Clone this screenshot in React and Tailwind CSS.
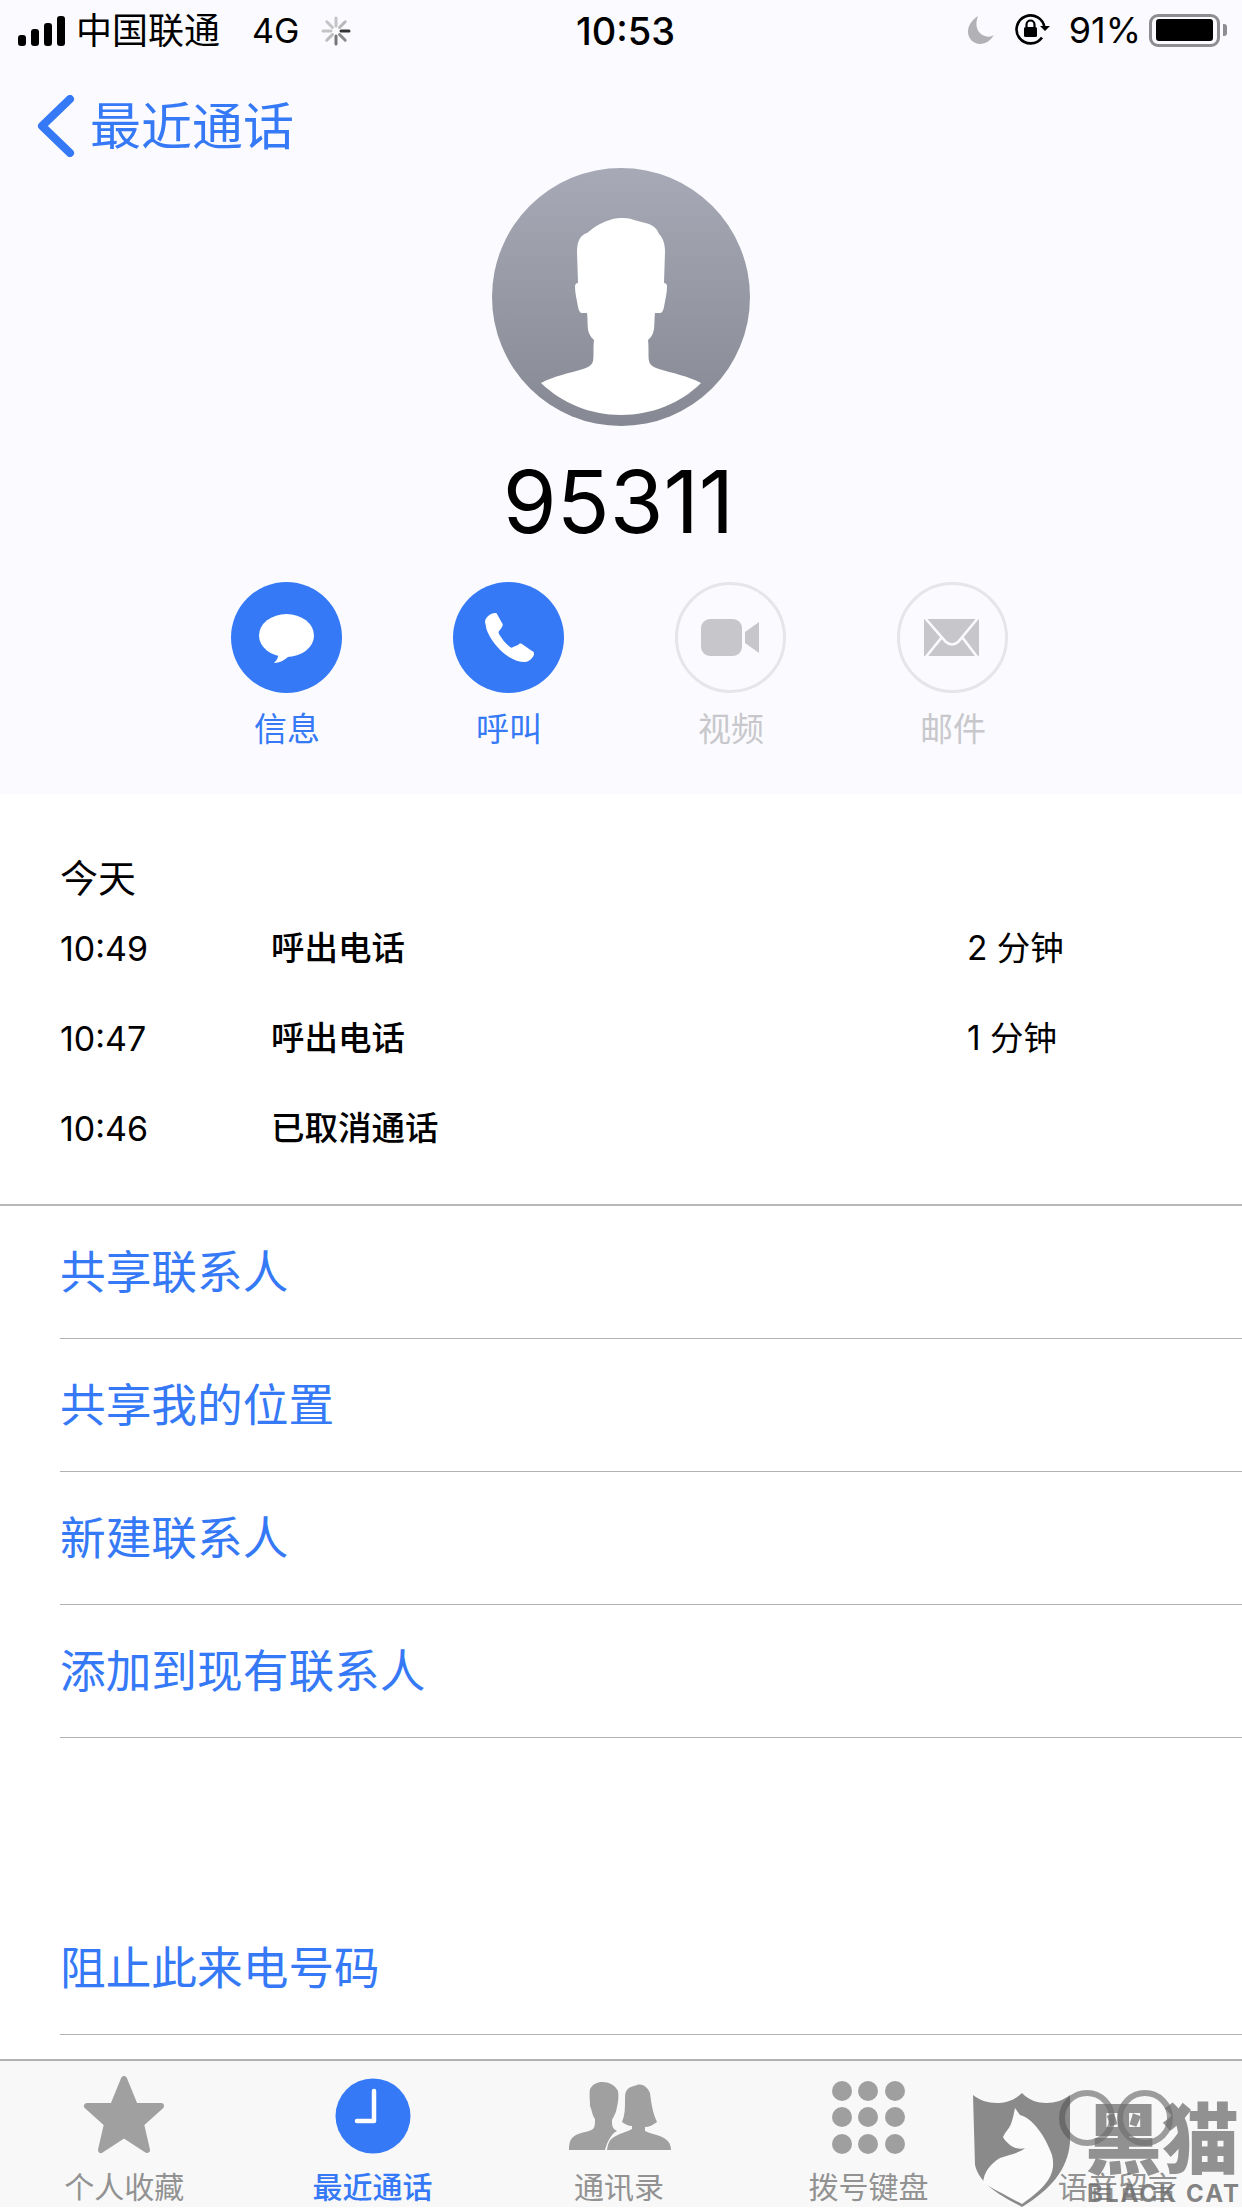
const FONT = "font-['Inter','Noto_Sans_CJK_SC',sans-serif]";

function Signal() {
  return (
    <svg width="50" height="30" viewBox="0 0 50 30" className="ml-[17px]">
      <rect x="1" y="19" width="8" height="11" rx="3" fill="#000" />
      <rect x="14" y="13" width="8" height="17" rx="3" fill="#000" />
      <rect x="27" y="7" width="8" height="23" rx="3" fill="#000" />
      <rect x="40" y="0" width="8" height="30" rx="3" fill="#000" />
    </svg>
  );
}

function Spinner() {
  const spokes = [0, 45, 90, 135, 180, 225, 270, 315];
  const colors = ['#c4c4c4', '#b8b8b8', '#333', '#8a8a8a', '#777', '#bbb', '#c4c4c4', '#c4c4c4'];
  return (
    <svg width="30" height="30" viewBox="0 0 30 30">
      {spokes.map((a, i) => (
        <line key={a} x1="15" y1="2" x2="15" y2="10" stroke={colors[i]} strokeWidth="3" strokeLinecap="round" transform={`rotate(${a} 15 15)`} />
      ))}
    </svg>
  );
}

function StatusBar() {
  return (
    <div className="relative flex h-[60px] items-center text-black">
      <div className="mt-[1px] flex items-center">
        <Signal />
        <span className="ml-[9px] text-[36px] leading-[44px]">中国联通</span>
        <span className="ml-[32px] text-[34px] leading-[44px]">4G</span>
        <div className="ml-[22px]"><Spinner /></div>
      </div>
      <span className="absolute left-[576px] top-[9px] text-[38px] font-medium leading-[44px]">10:53</span>
      <div className="ml-auto flex items-center">
        <svg width="30" height="30" viewBox="0 0 30 30">
          <path d="M13 1C7 5 3 10 3 17c0 7 6 12 12 12 6 0 11-4 14-9-3 2-6 2-9 1C13 19 9 11 13 1z" fill="#b1b1b6" />
        </svg>
        <svg width="36" height="32" viewBox="0 0 36 32" className="ml-[19px]">
          <path d="M28 23.5A14 14 0 1 1 30.5 14" fill="none" stroke="#000" strokeWidth="2.6" />
          <path d="M26 12l5 5 5-5z" fill="#000" />
          <rect x="10" y="13" width="13" height="10" rx="1.5" fill="#000" />
          <path d="M12.5 13v-2.500a4 4 0 0 1 8 0V13" fill="none" stroke="#000" strokeWidth="2.2" />
        </svg>
        <span className="ml-[19px] text-[36px] leading-[44px]">91%</span>
        <div className="ml-[8px] flex h-[33px] w-[71px] items-center justify-center rounded-[9px] border-[3px] border-[#8e8e90]">
          <div className="h-[22px] w-[57px] rounded-[3px] bg-black" />
        </div>
        <div className="ml-[3px] mr-[15px] h-[12px] w-[4px] rounded-r-[3px] bg-[#8e8e90]" />
      </div>
    </div>
  );
}

function Avatar() {
  return (
    <svg width="258" height="258" viewBox="0 0 258 258" className="mx-auto block">
      <defs>
        <linearGradient id="av" x1="0" y1="0" x2="0" y2="1">
          <stop offset="0" stopColor="#a7aab6" />
          <stop offset="1" stopColor="#868993" />
        </linearGradient>
      </defs>
      <circle cx="129" cy="129" r="129" fill="url(#av)" />
      <path
        fill="#fff"
        d="M128 50C122 50 114 53 108 56C102 59 99 62 95 65C88 67 85 74 85 84L86 115C84 115 83 116 83 119C83 126 85 132 86 139C87 143 88 145 90 145L95 145C96 152 95 160 97 165C98 168 100 170 102 172C101 180 102 188 101 193C100 197 97 199 91 201C78 205 62 208 49 215C70 235 98 247 129 247C160 247 189 235 209 215C196 208 180 205 167 201C161 199 158 197 157 193C156 188 157 180 156 172C158 170 160 168 161 165C163 160 162 152 163 145L168 145C170 145 171 143 172 139C173 132 175 126 175 119C175 116 174 115 172 115L173 84C173 76 171 70 167 66C165 60 161 58 157 56L142 52C137 50 133 50 128 50Z"
      />
    </svg>
  );
}

function ActionButton({ label, active, children }) {
  return (
    <div className="flex w-[222px] flex-col items-center">
      <div className={`h-[111px] w-[111px] rounded-full ${active ? 'bg-[#3579f6]' : 'border-[3px] border-[#e5e5ea]'}`}>
        {children}
      </div>
      <span className={`ml-[2px] mt-[16px] text-[33px] leading-[40px] ${active ? 'text-[#3579f6]' : 'text-[#c8c8cc]'}`}>{label}</span>
    </div>
  );
}

function Actions() {
  return (
    <div className="mt-[30px] flex pl-[175px]">
      <ActionButton label="信息" active>
        <svg width="111" height="111" viewBox="0 0 111 111">
          <ellipse cx="55.500" cy="53.500" rx="27.500" ry="21.500" fill="#fff" />
          <path d="M47 70C48 75 46 78 43 81C50 81 55 77 59 73z" fill="#fff" />
        </svg>
      </ActionButton>
      <ActionButton label="呼叫" active>
        <svg width="111" height="111" viewBox="0 0 111 111">
          <path
            fill="#fff"
            d="M42 31C38 31 32 35 32 40C33 44 33 47 35 51C40 61 47 69 56 75C61 78 66 80 72 80C76 80 81 75 81 72C81 70 80 69 79 69L69 62C67 61 66 62 65 63L60 65C59 66 58 66 57 65C52 61 49 57 46 52C45 50 46 49 47 48L49 45C50 43 50 42 49 41L44 32C44 31 43 31 42 31Z"
          />
        </svg>
      </ActionButton>
      <ActionButton label="视频">
        <svg width="105" height="105" viewBox="3 3 105 105">
          <rect x="26" y="37" width="41" height="37" rx="9" fill="#c7c6cb" />
          <path d="M70 50L84 40V71L70 61z" fill="#c7c6cb" />
        </svg>
      </ActionButton>
      <ActionButton label="邮件">
        <svg width="105" height="105" viewBox="3 3 105 105">
          <rect x="27" y="37" width="55" height="37" fill="#c7c6cb" />
          <path d="M28 36L49 60Q55 65 61 60L81 36M28 76L45 55M81 76L65 55" fill="none" stroke="#fbfbff" strokeWidth="2.600" />
        </svg>
      </ActionButton>
    </div>
  );
}

const CALLS = [
  { time: '10:49', type: '呼出电话', dur: '2 分钟' },
  { time: '10:47', type: '呼出电话', dur: '1 分钟' },
  { time: '10:46', type: '已取消通话', dur: '' },
];

function CallLog() {
  return (
    <div className="border-b-2 border-[#b8b8b8] pb-[31px] pl-[60px] pt-[62px]">
      <div className="mb-[3px] text-[38px] leading-[44px] text-black">今天</div>
      {CALLS.map((c) => (
        <div key={c.time} className="flex h-[90px] items-center text-[33.500px] text-black">
          <span className="w-[211px] text-[34px]">{c.time}</span>
          <span className="w-[696px] font-medium">{c.type}</span>
          <span>{c.dur}</span>
        </div>
      ))}
    </div>
  );
}

function LinkRow({ children }) {
  return (
    <div className="ml-[60px] flex h-[133px] items-center border-b border-[#b2b2b2] text-[45.700px] text-[#3579f6]">
      <span className="mt-[3px]">{children}</span>
    </div>
  );
}

function Tab({ label, active, labelShift, children }) {
  return (
    <div className="flex flex-1 flex-col items-center">
      <svg width="124" height="100" viewBox="0 0 124 100">{children}</svg>
      <span className={`mt-[5px] text-[30px] leading-[36px] ${labelShift || ''} ${active ? 'font-medium text-[#3579f6]' : 'text-[#929292]'}`}>{label}</span>
    </div>
  );
}

function TabBar() {
  return (
    <div className="flex h-[148px] border-t-2 border-[#b2b2b2] bg-[#f8f8f8] pt-[3px]">
      <Tab label="个人收藏">
        <path
          d="M62 15L73 42H99L79 60L85 86L62 71L39 86L45 60L25 42H51Z"
          fill="#a0a0a0"
          stroke="#a0a0a0"
          strokeWidth="6"
          strokeLinejoin="round"
        />
      </Tab>
      <Tab label="最近通话" active>
        <circle cx="62" cy="52" r="37.500" fill="#3579f6" />
        <path d="M63 27V57H46" fill="none" stroke="#fff" strokeWidth="4.500" strokeLinecap="round" strokeLinejoin="round" />
      </Tab>
      <Tab label="通讯录" labelShift="-translate-x-[2px]">
        <path
          fill="#a0a0a0"
          d="M10 86C10 79 11 74 17 71C23 68 30 68 34 65C36 63 36 59 36 55C33 51 33 46 31 42C31 36 30 30 31 25C34 20 38 18 43 18C50 18 56 21 59 27C60 33 59 38 58 43C57 49 55 52 53 56C53 60 53 63 55 65L58 67C52 70 48 78 46 86Z"
        />
        <path
          fill="#a0a0a0"
          d="M48 86C49 80 50 76 55 73C61 69 68 68 73 65V62C69 62 66 60 63 58C66 51 66 44 66 37C66 32 66 28 68 26C70 23 75 22 78 21C84 19 89 24 91 29C92 38 94 50 98 58C94 61 90 63 86 63V67C92 70 100 71 105 74C110 77 112 81 112 86Z"
        />
      </Tab>
      <Tab label="拨号键盘" labelShift="-translate-x-[1px]">
        {[27, 53, 80].map((y) =>
          [35, 61, 88].map((x) => <circle key={`${x}-${y}`} cx={x} cy={y} r="10" fill="#9f9f9f" />)
        )}
      </Tab>
      <Tab label="语音留言">
        <g />
      </Tab>
    </div>
  );
}

// watermark sitting on top of the tab bar
function Watermark() {
  return (
    <div className="pointer-events-none absolute left-[960px] top-[2080px] h-[128px] w-[282px]">
      <svg width="282" height="128" viewBox="0 0 282 128" className="absolute left-0 top-0">
        <path d="M13 15C25 25 48 27 62 13C75 27 98 25 110 15L110 62C108 90 90 110 62 127C40 115 20 105 15 85Z" fill="#8a8a8a" />
        <path
          fill="#fbfbfb"
          d="M55 28L60 35C72 38 85 55 92 75C96 92 90 105 62 124C45 115 32 108 23 103C24 92 30 84 40 78C50 74 60 73 65 68C60 70 54 68 50 65C47 62 44 60 43 57C45 52 49 49 51 44C53 38 54 33 55 28Z"
        />
        <circle cx="127" cy="38" r="25" fill="none" stroke="rgba(80,80,80,0.55)" strokeWidth="6" />
        <circle cx="185" cy="38" r="25" fill="none" stroke="rgba(80,80,80,0.55)" strokeWidth="6" />
      </svg>
      <span className="absolute left-[125px] top-[15px] text-[77px] font-black leading-[90px] text-[#6f6f6f]/75">黑猫</span>
      <span className="absolute left-[127px] top-[101px] text-[24px] font-bold leading-[26px] tracking-[2px] text-[#6e6e6e]/85">BLACK CAT</span>
    </div>
  );
}

export default function App() {
  return (
    <div className={`relative h-[2208px] w-[1242px] overflow-hidden bg-white ${FONT}`}>
      <div className="h-[794px] bg-[#fbfbff]">
        <StatusBar />
        <div className="flex h-[108px] items-start pl-[36px] pt-[35px]">
          <svg width="40" height="62" viewBox="0 0 40 62">
            <path d="M34 4L6 31L34 58" fill="none" stroke="#3579f6" strokeWidth="8" strokeLinecap="round" strokeLinejoin="round" />
          </svg>
          <span className="ml-[14px] mt-[6px] text-[51px] leading-[52px] text-[#3579f6]">最近通话</span>
        </div>
        <Avatar />
        <div className="mt-[26px] pr-[5px] text-center text-[87px] font-normal leading-[100px] text-black">95311</div>
        <Actions />
      </div>
      <CallLog />
      <LinkRow>共享联系人</LinkRow>
      <LinkRow>共享我的位置</LinkRow>
      <LinkRow>新建联系人</LinkRow>
      <LinkRow>添加到现有联系人</LinkRow>
      <div className="h-[164px]" />
      <LinkRow>阻止此来电号码</LinkRow>
      <div className="h-[24px]" />
      <TabBar />
      <Watermark />
    </div>
  );
}
